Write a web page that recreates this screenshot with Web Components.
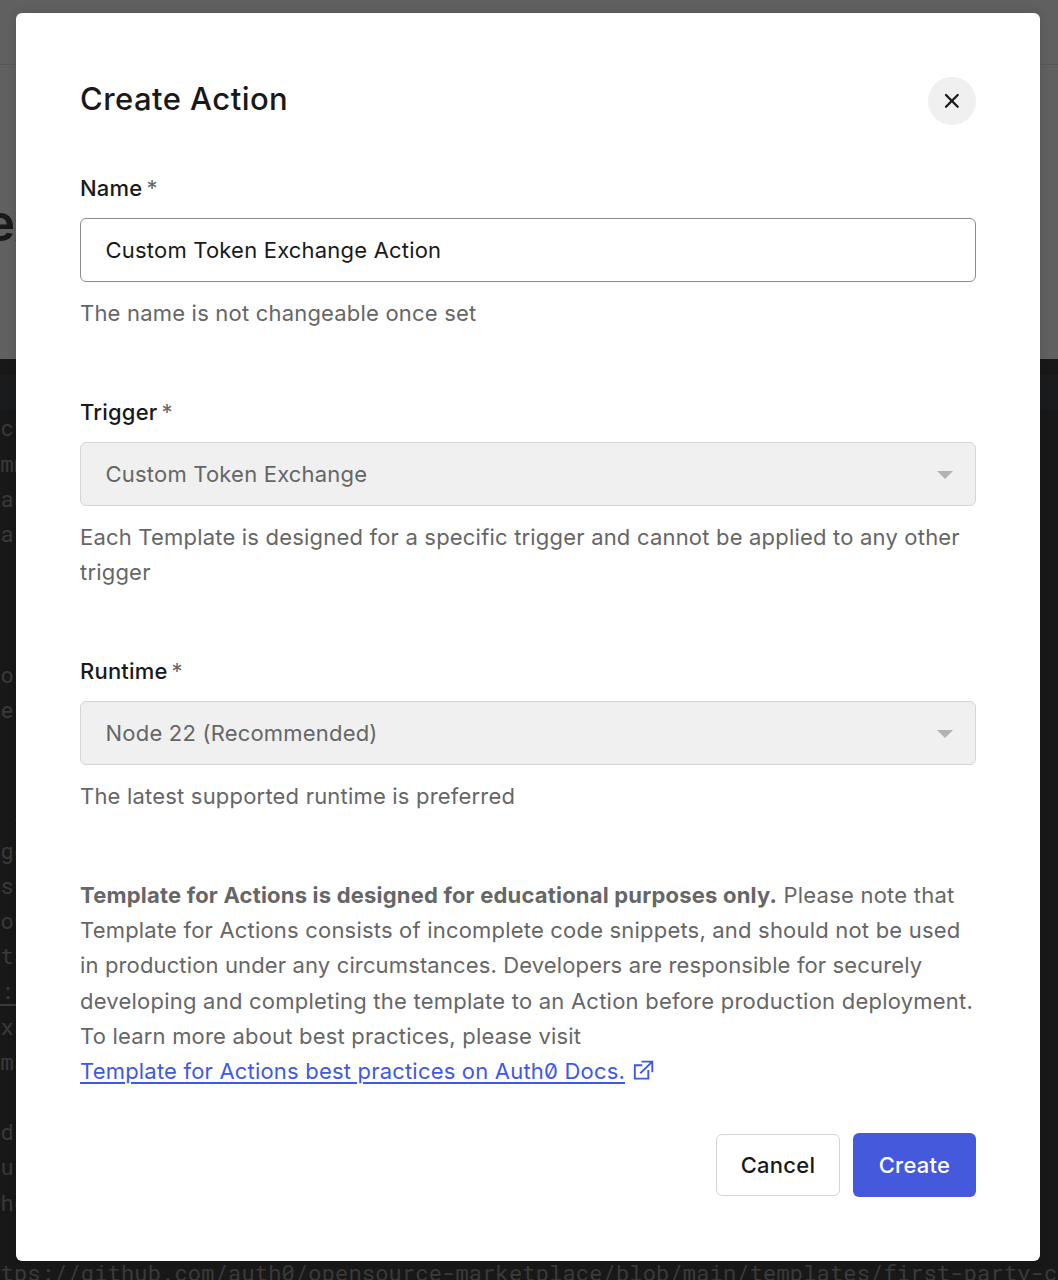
<!DOCTYPE html>
<html lang="en">
<head>
<meta charset="utf-8">
<title>Create Action</title>
<style>
html,body{margin:0;padding:0}
body{width:1058px;height:1280px;overflow:hidden;position:relative;background:#606060;font-family:Inter,"Liberation Sans",sans-serif;font-size:22px;line-height:35.2px;color:#191919;letter-spacing:.195px}
action-dialog{position:absolute;left:16px;top:13px}
</style>
</head>
<body>
<page-backdrop></page-backdrop>
<action-dialog heading="Create Action">
  <form-field label="Name" value="Custom Token Exchange Action">The name is not changeable once set</form-field>
  <form-field label="Trigger" value="Custom Token Exchange" disabled>Each Template is designed for a specific trigger and cannot be applied to any other trigger</form-field>
  <form-field label="Runtime" value="Node 22 (Recommended)" disabled>The latest supported runtime is preferred</form-field>
  <template-note></template-note>
  <action-button slot="footer" variant="outline">Cancel</action-button>
  <action-button slot="footer" variant="primary">Create</action-button>
</action-dialog>
<script>
class PageBackdrop extends HTMLElement{
  constructor(){
    super();
    const rows=['ct','mm','an','al','','','','ou','e.',' -','',' a','ge','st','ou','ta',':','xa','ma','','d','us','he','','tps://github.com/auth0/opensource-marketplace/blob/main/templates/first-party-c'];
    this.attachShadow({mode:'open'}).innerHTML=`
    <style>
      :host{display:flex;flex-direction:column;height:1280px;overflow:hidden;background:#606060}
      .bar{height:64px;border-bottom:1px solid #585858;flex:none}
      .title{height:294px;flex:none;box-sizing:border-box;padding-top:126px;font-size:51px;font-weight:600;line-height:64px;color:#191919;white-space:nowrap;text-indent:-15px;letter-spacing:0}
      .code{flex:1;background:#181818;padding-top:16.2px;font-family:"Roboto Mono","DejaVu Sans Mono","Liberation Mono",monospace;font-size:22px;line-height:35.2px;color:#3a3a3a;letter-spacing:.175px}
      .active{height:35.2px;background:#191b1d}
      .row{height:35.2px;white-space:pre;padding-left:.6px}
      .row.u{position:relative}
      .row.u::after{content:"";position:absolute;left:0;width:16px;top:30.4px;height:2px;background:#3a3a3a}
    </style>
    <div class="bar"></div><div class="title">ex</div>
    <div class="code"><div class="active"></div>${rows.map(r=>`<div class="row${r===':'?' u':''}">${r}</div>`).join('')}</div>`;
  }
}
class ActionDialog extends HTMLElement{
  constructor(){
    super();
    this.attachShadow({mode:'open'}).innerHTML=`
    <style>
      :host{display:flex;flex-direction:column;box-sizing:border-box;width:1024px;height:1248px;padding:64px;background:#fff;border-radius:6px;box-shadow:0 0 10px rgba(0,0,0,.12)}
      header{display:flex;justify-content:space-between;height:48px;margin-bottom:45.8px}
      h1{margin:0;font-size:31px;font-weight:500;line-height:43px;letter-spacing:.45px}
      button{width:48px;height:48px;border:0;border-radius:50%;background:#f0f0f0;padding:0;display:flex;align-items:center;justify-content:center}
      .body{display:flex;flex-direction:column;gap:64px}
      footer{display:flex;justify-content:flex-end;align-items:center;gap:13px;margin-top:44px}
    </style>
    <header><h1></h1><button aria-label="Close"><svg width="48" height="48" viewBox="0 0 48 48" fill="none" stroke="#191919" stroke-width="2.3" stroke-linecap="round"><path d="M18 18 29.7 29.7M29.7 18 18 29.7"/></svg></button></header>
    <div class="body"><slot></slot></div>
    <footer><slot name="footer"></slot></footer>`;
  }
  connectedCallback(){this.shadowRoot.querySelector('h1').textContent=this.getAttribute('heading')}
}
class FormField extends HTMLElement{
  constructor(){
    super();
    this.attachShadow({mode:'open'}).innerHTML=`
    <style>
      :host{display:flex;flex-direction:column}
      .label{display:flex;gap:4px;height:35.2px;margin-bottom:12.2px;font-weight:500}
      .star{font-weight:400;color:#666}
      .box{display:flex;align-items:center;justify-content:space-between;box-sizing:border-box;height:64px;border:1px solid #8c8c8c;border-radius:6px;padding:0 22px 0 24.6px}
      svg{display:none;margin-top:1.6px}
      :host([disabled]) .box{background:#f0f0f0;border-color:#d4d4d4;color:#666}
      :host([disabled]) svg{display:block}
      .help{margin-top:13.4px;color:#666}
    </style>
    <div class="label"><span class="name"></span><span class="star">*</span></div>
    <div class="box"><span class="value"></span><svg width="16" height="8" viewBox="0 0 16 8"><path d="M0 0h16L8 8z" fill="#b2b2b2"/></svg></div>
    <div class="help"><slot></slot></div>`;
  }
  connectedCallback(){
    this.shadowRoot.querySelector('.name').textContent=this.getAttribute('label');
    this.shadowRoot.querySelector('.value').textContent=this.getAttribute('value');
  }
}
class TemplateNote extends HTMLElement{
  constructor(){
    super();
    this.attachShadow({mode:'open'}).innerHTML=`
    <style>
      :host{display:block;color:#666;white-space:nowrap}
      b{font-weight:700}
      .tight{letter-spacing:.137px}
      .loose{letter-spacing:.225px}
      a{color:#3f59e4;text-decoration:underline;text-decoration-thickness:2px;text-underline-offset:3px;font-feature-settings:"zero"}
      svg{margin-left:7.5px;vertical-align:-1px}
    </style>
    <b>Template for Actions is designed for educational purposes only.</b><span class="loose"> Please note that</span><br>
    Template for Actions consists of incomplete code snippets, and should not be used<br>
    <span class="tight">in production under any circumstances. Developers are responsible for securely</span><br>
    <span class="loose">developing and completing the template to an Action before production deployment.</span><br>
    To learn more about best practices, please visit<br>
    <a href="#">Template for Actions best practices on Auth0 Docs.</a><svg width="21" height="20" viewBox="0 0 21 20" fill="none" stroke="#3f59e4" stroke-width="1.9"><path d="M9.3 5.2H1.8v13.4h13.5V10M8.5 1.6h10.8v10.6M19 1.9 7.3 13.3"/></svg>`;
  }
}
class ActionButton extends HTMLElement{
  constructor(){
    super();
    this.attachShadow({mode:'open'}).innerHTML=`
    <style>
      :host{display:flex}
      button{font:inherit;font-weight:500;box-sizing:border-box;border-radius:6px;padding:0;letter-spacing:.25px;width:124px;height:62px;border:1px solid #d4d4d4;background:#fff;color:#191919}
      :host([variant=primary]) button{width:123px;height:64px;border:0;background:#4459db;color:#fff}
    </style>
    <button><slot></slot></button>`;
  }
}
customElements.define('page-backdrop',PageBackdrop);
customElements.define('form-field',FormField);
customElements.define('template-note',TemplateNote);
customElements.define('action-button',ActionButton);
customElements.define('action-dialog',ActionDialog);
</script>
</body>
</html>
